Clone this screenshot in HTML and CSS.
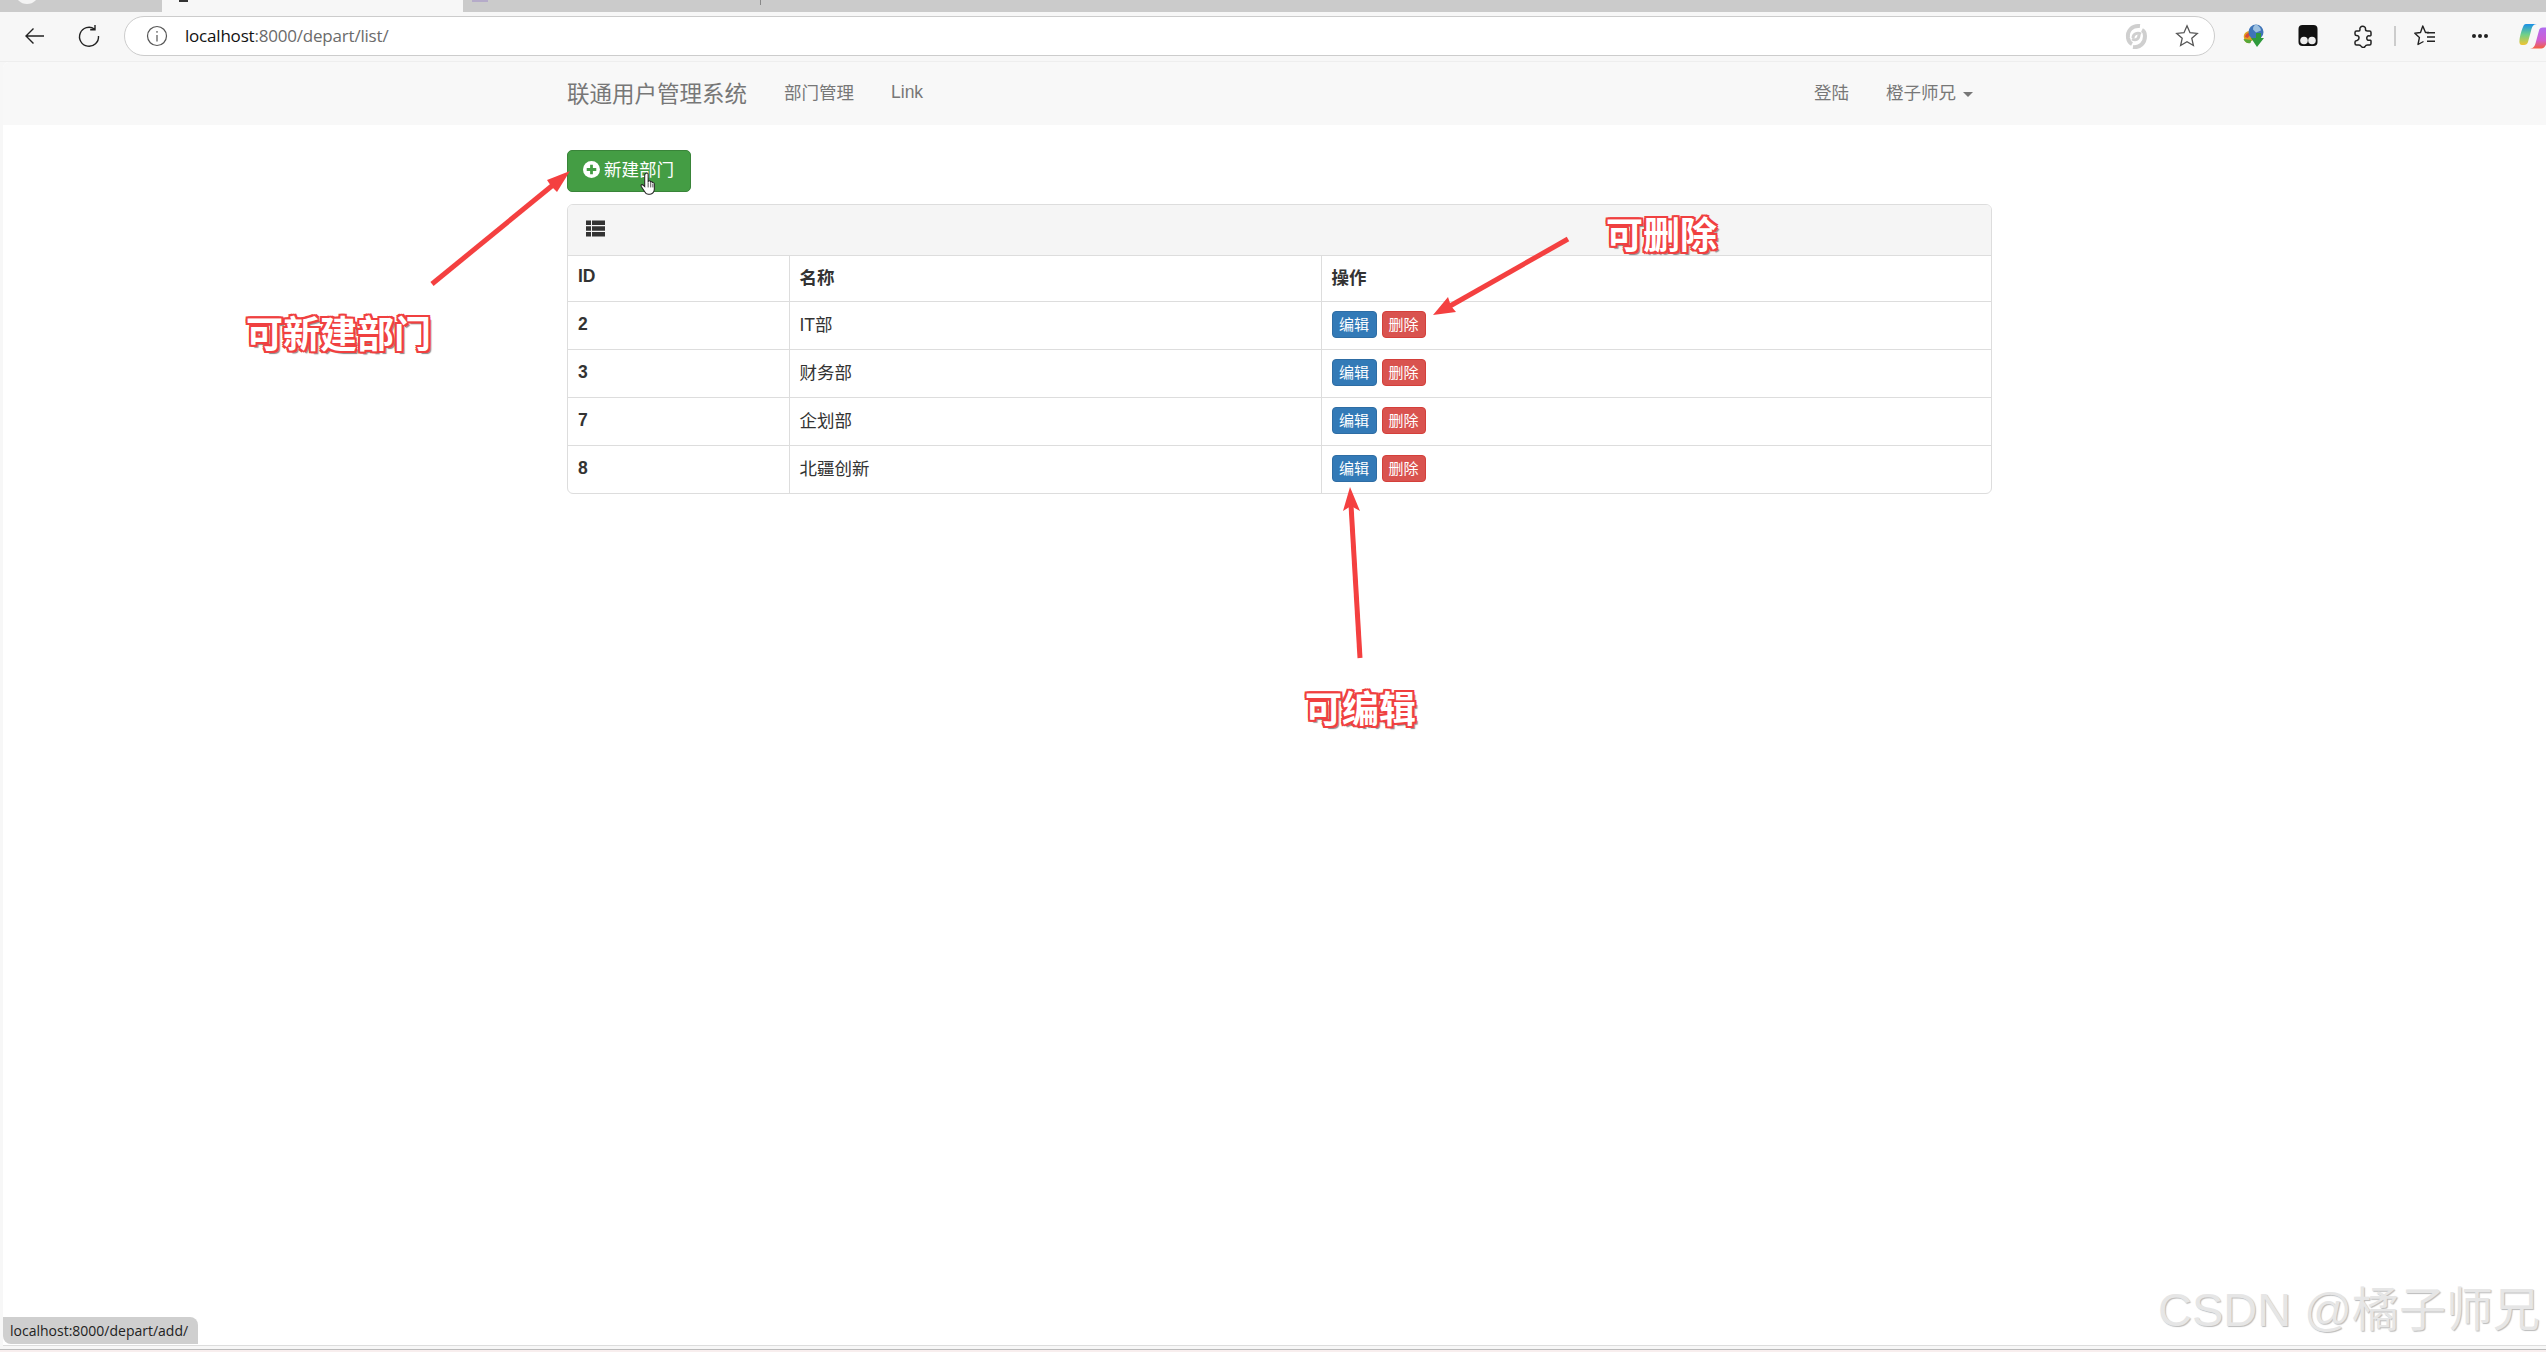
FILE: index.html
```html
<!DOCTYPE html>
<html lang="zh-CN">
<head>
    <meta charset="UTF-8">
    <title>部门列表</title>
    <link rel="stylesheet" href="styles.css">
</head>
<body>
    <div class="tab-strip">
        <div class="tab tab-left"><span class="tab-dot"></span></div>
        <div class="tab tab-active"><span class="tab-fav"></span></div>
        <div class="tab tab-right"><span class="tab-fav-2"></span><span class="tab-line"></span></div>
    </div>

    <div class="toolbar">
        <svg class="tool-icon" width="24" height="24" viewBox="0 0 24 24" fill="none" stroke="#222" stroke-width="1.400"><path d="M22 12H4M11.500 4.500L4 12l7.500 7.500"/></svg>
        <svg class="tool-icon reload" width="24" height="24" viewBox="0 0 24 24" fill="none" stroke="#222" stroke-width="1.400"><path d="M17.500 5A9.500 9.500 0 1 0 21.500 12M18 1v4.800h-4.800"/></svg>
        <div class="address">
            <svg width="22" height="22" viewBox="0 0 22 22" fill="none" stroke="#555" stroke-width="1.200"><circle cx="11" cy="11" r="9.500"/><path d="M11 10v6.500M11 6v1.800"/></svg>
            <div class="url"><span class="url-host">localhost</span>:8000/depart/list/</div>
            <svg class="addr-sync" width="22" height="26" viewBox="0 0 22 26" fill="none" stroke="#cfcfcf" stroke-width="4"><path d="M15 3C7 2 2 8 3 15c.5 3 2 5 4 6"/><path d="M8 24c7 1 12-4 12-11 0-3-1-5-3-6"/><path d="M8 15c0-4 4-6 8-4" stroke-width="3"/><path d="M14 12c0 4-3 6-7 4" stroke-width="3"/></svg>
            <svg width="24" height="24" viewBox="0 0 24 24" fill="none" stroke="#555" stroke-width="1.300"><path d="M12 1.800l3 6.900 7.300.7-5.500 4.900 1.600 7.200-6.400-3.800-6.400 3.800 1.600-7.200-5.500-4.900 7.300-.7z"/></svg>
        </div>
        <div class="tool-right">
            <svg class="ti-idm" width="22" height="24" viewBox="0 0 22 24">
                <path d="M2 14C1 10 4 7 8 7l3 9-5 3c-2 0-3.500-2-4-5z" fill="#e0a020"/>
                <path d="M3 13c0-2 2-4 4-4l1 3c-1 0-2 1-2 2z" fill="#d94a38"/>
                <path d="M1.500 15c1 3 4 5 7 4l1-3z" fill="#58a838"/>
                <circle cx="14" cy="8" r="7.500" fill="#3f74b8"/>
                <path d="M14 .5c3 1 5 4 5 6l-5 2-3-3c0-3 1-4 3-5z" fill="#9cc0e0"/>
                <path d="M9 14h5V9h5v5h3l-7 9z" fill="#2f9a3c"/>
            </svg>
            <svg class="ti-tamper" width="22" height="24" viewBox="0 0 22 24"><rect x="1.500" y="1" width="19" height="21" rx="4" fill="#111"/><circle cx="7" cy="16.500" r="3.800" fill="#eee"/><circle cx="15" cy="16.500" r="3.800" fill="#eee"/></svg>
            <svg class="ti-puzzle" width="22" height="24" viewBox="0 0 22 24" fill="none" stroke="#222" stroke-width="1.500" stroke-linejoin="round"><path d="M8 5.500c-1-4 6-4.500 5.500 0 0 1 1 1.500 2 1.500h2c1 0 1.500.5 1.500 1.500V11c0 1-1 1-2 .8-3-.3-3 4.800 0 4.500 1-.2 2-.2 2 .8v2.400c0 1-.5 1.500-1.500 1.500h-2c-1 0-2 .5-2.500 1.500-1 1.500-3.500 1-4-.5-.3-1-1-1-2-1H4.500c-1 0-1.500-.5-1.500-1.500V18c0-1 1-1.300 2-1.500 3-1 2.500-5-.5-5-1 0-1.500-.5-1.500-1.500V8.500C3 7.500 3.500 7 4.500 7H7c.7 0 1-.7 1-1.500z"/></svg>
            <span class="tool-sep"></span>
            <svg class="ti-fav" width="22" height="24" viewBox="0 0 22 24" fill="none" stroke="#222" stroke-width="1.400" stroke-linejoin="round"><path d="M15 8.500h-3.500L8.800 2 6.500 8.500.8 9.200l4.600 4.400L4 20.500l5.500-3"/><path d="M13 8.800h8M13 13h8M13 17.200h8"/></svg>
            <div class="more"><i></i><i></i><i></i></div>
            <svg class="copilot" width="30" height="26" viewBox="0 0 30 26">
                <defs>
                    <linearGradient id="cpA" x1="0" y1="0" x2="0" y2="1"><stop offset="0" stop-color="#1a90e8"/><stop offset=".5" stop-color="#6fd08a"/><stop offset="1" stop-color="#f2c530"/></linearGradient>
                    <linearGradient id="cpB" x1="0" y1="0" x2="0" y2="1"><stop offset="0" stop-color="#b06cf0"/><stop offset=".6" stop-color="#d05fd0"/><stop offset="1" stop-color="#f5603f"/></linearGradient>
                </defs>
                <path d="M7 1h11c-4 0-5 3-6 7l-3 11c-.5 2-2 3-4 3H3c-2 0-3-2-2.500-5C1 12 3 6 4 4c.7-2 1.500-3 3-3z" fill="url(#cpA)"/>
                <path d="M30 9c0 5-2 11-3.500 13.500-1 2-2.500 3-4 3H11c4 0 5-3 6-7l3-11c.5-2 2-3 4-3h2c3 0 4 2 4 4.500z" fill="url(#cpB)"/>
            </svg>
        </div>
    </div>

    <div class="page">
        <nav class="navbar">
            <div class="container nav-inner">
                <a class="brand">联通用户管理系统</a>
                <a class="nav-link nav-cjk">部门管理</a>
                <a class="nav-link">Link</a>
                <div class="nav-right">
                    <a class="nav-link">登陆</a>
                    <a class="nav-link">橙子师兄<span class="caret"></span></a>
                </div>
            </div>
        </nav>

        <div class="container content">
            <div class="toolbar-row">
                <a class="btn btn-add">
                    <svg class="plus-icon" width="17" height="17" viewBox="0 0 16 16"><circle cx="8" cy="8" r="8" fill="#fff"/><path d="M8 3.500v9M3.500 8h9" stroke="#449d44" stroke-width="2.600"/></svg>
                    <span>新建部门</span>
                </a>
            </div>

            <div class="panel">
                <div class="panel-heading">
                    <svg class="list-icon" width="19" height="17" viewBox="0 0 19 16" fill="#333"><path d="M0 0h5v4.400H0zM6 0h13v4.400H6zM0 5.800h5v4.400H0zM6 5.800h13v4.400H6zM0 11.600h5V16H0zM6 11.600h13V16H6z"/></svg>
                </div>
                <table class="table">
                    <thead>
                        <tr><th class="col-id">ID</th><th class="col-name">名称</th><th>操作</th></tr>
                    </thead>
                    <tbody>
                        <tr>
                            <th>2</th><td class="name">IT部</td>
                            <td class="ops"><a class="btn-xs btn-edit">编辑</a><a class="btn-xs btn-del">删除</a></td>
                        </tr>
                        <tr>
                            <th>3</th><td class="name">财务部</td>
                            <td class="ops"><a class="btn-xs btn-edit">编辑</a><a class="btn-xs btn-del">删除</a></td>
                        </tr>
                        <tr>
                            <th>7</th><td class="name">企划部</td>
                            <td class="ops"><a class="btn-xs btn-edit">编辑</a><a class="btn-xs btn-del">删除</a></td>
                        </tr>
                        <tr>
                            <th>8</th><td class="name">北疆创新</td>
                            <td class="ops"><a class="btn-xs btn-edit">编辑</a><a class="btn-xs btn-del">删除</a></td>
                        </tr>
                    </tbody>
                </table>
            </div>
        </div>

        <!-- hand cursor over the add button -->
        <svg class="cursor" width="18" height="24" viewBox="0 0 20 28"><path d="M6 2c1-1.500 3-1 3 1v8l1-.5c1-.5 2 0 2 1 1-.5 2 0 2.200 1 1-.3 2 .3 2 1.500v6c0 3-2 6-5 6H9c-2 0-3-1-4-3l-4-6c-1-2 1-3 2.500-1.500L5 17V3z" fill="#fff" stroke="#222" stroke-width="1.200"/><path d="M9 12v6M12 12v6M14.500 14v4" stroke="#222" stroke-width=".9"/></svg>

        <!-- red annotations drawn on top of the screenshot -->
        <svg class="arrows" width="2546" height="1352" viewBox="0 0 2546 1352" fill="#f44040">
            <path d="M432 284L553 185" stroke="#f44040" stroke-width="5"/>
            <path d="M570 171L557 192L551 186L547 180z"/>
            <path d="M1568 239L1450 306" stroke="#f44040" stroke-width="5"/>
            <path d="M1433 315L1448 297L1451 306L1456 312z"/>
            <path d="M1360 658L1351 505" stroke="#f44040" stroke-width="5"/>
            <path d="M1350 487L1360 511L1351 506L1343 511z"/>
        </svg>
        <div class="note note-add">可新建部门</div>
        <div class="note note-del">可删除</div>
        <div class="note note-edit">可编辑</div>

        <div class="status">localhost:8000/depart/add/</div>
        <div class="watermark">CSDN @橘子师兄</div>
    </div>
    <div class="bottom-edge"></div>
</body>
</html>
```

FILE: styles.css
```css
html, body {
    margin: 0;
    height: 100%;
    overflow: hidden;
    background: #f7f7f7;
}

body {
    display: flex;
    flex-direction: column;
    font-family: "Liberation Sans", "Noto Sans CJK SC", sans-serif;
    font-size: 17.500px;
    color: #333;
}

a {
    text-decoration: none;
}

/* browser chrome */
.tab-strip {
    display: flex;
    height: 12px;
    background: #cbcbcb;
    flex: none;
    overflow: hidden;
}

.tab {
    height: 12px;
    position: relative;
    overflow: hidden;
}

.tab-left {
    width: 162px;
    border-radius: 0 0 10px 0;
}

.tab-dot {
    display: block;
    width: 24px;
    height: 24px;
    margin: -20px 0 0 15px;
    border-radius: 50%;
    background: #f3f3f3;
}

.tab-active {
    width: 301px;
    background: #f7f7f7;
}

.tab-fav {
    position: absolute;
    left: 17px;
    top: 0;
    width: 9px;
    height: 2px;
    background: #333;
}

.tab-right {
    flex: 1;
    border-radius: 0 0 0 10px;
}

.tab-fav-2 {
    position: absolute;
    left: 9px;
    top: 0;
    width: 16px;
    height: 2px;
    background: #b5abc9;
}

.tab-line {
    position: absolute;
    left: 297px;
    top: 0;
    width: 1px;
    height: 5px;
    background: #888;
}

.toolbar {
    display: flex;
    align-items: center;
    height: 50px;
    flex: none;
    padding: 0 0 2px 22px;
    border-bottom: 1px solid #eee;
    box-sizing: border-box;
}

.tool-icon {
    flex: none;
    margin-right: 31px;
}

.reload {
    margin-right: 23px;
}

.address {
    display: flex;
    align-items: center;
    flex: none;
    width: 2091px;
    height: 40px;
    box-sizing: border-box;
    padding: 0 15px 0 21px;
    background: #fff;
    border: 1px solid #ccc;
    border-radius: 20px;
    gap: 17px;
}

.url {
    flex: 1;
    font-family: "Open Sans", sans-serif;
    font-size: 17px;
    color: #6b6b6b;
    letter-spacing: -0.200px;
}

.url-host {
    color: #111;
}

.addr-sync {
    margin-right: 11px;
}

.tool-right {
    display: flex;
    align-items: center;
    flex: none;
}

.ti-idm {
    margin-left: 27px;
}

.ti-tamper,
.ti-puzzle {
    margin-left: 33px;
}

.tool-sep {
    width: 2px;
    height: 20px;
    background: #ccc;
    margin-left: 20px;
}

.ti-fav {
    margin-left: 18px;
}

.more {
    display: flex;
    gap: 2px;
    margin-left: 36px;
}

.more i {
    width: 4px;
    height: 4px;
    border-radius: 50%;
    background: #222;
}

.copilot {
    margin-left: 31px;
    flex: none;
}

/* page */
.page {
    position: relative;
    flex: 1;
    margin-left: 3px;
    background: #fff;
    border-top-left-radius: 6px;
    border-bottom: 1px solid #ddd;
}

.bottom-edge {
    height: 3px;
    flex: none;
    box-sizing: border-box;
    margin-top: 3px;
    border-top: 1px solid #bbb;
    background: #f8eeee;
}

.container {
    width: 1425px;
    margin-left: 564px;
}

.navbar {
    height: 63px;
    background: #f8f8f8;
    border-top-left-radius: 6px;
}

.nav-inner {
    display: flex;
    align-items: center;
    height: 61px;
}

.brand {
    font-size: 22.500px;
    color: #777;
    margin-right: 37px;
    margin-bottom: 2px;
}

.nav-link {
    color: #777;
    margin-right: 37px;
}

.nav-cjk,
.nav-right {
    margin-bottom: 2px;
}

.nav-right {
    display: flex;
    margin-left: auto;
}

.nav-right .nav-link:last-child {
    margin-right: 19px;
}

.caret {
    display: inline-block;
    margin-left: 7px;
    vertical-align: middle;
    border-top: 5px solid #777;
    border-left: 5px solid transparent;
    border-right: 5px solid transparent;
}

.content {
    padding-top: 25px;
}

.toolbar-row {
    display: flex;
    margin-bottom: 12px;
}

.btn {
    display: inline-flex;
    align-items: center;
    height: 42px;
    width: 124px;
    box-sizing: border-box;
    padding: 0 15px;
    gap: 4px;
    white-space: nowrap;
    color: #fff;
    background: #449d44;
    border: 1px solid #398439;
    border-radius: 5px;
}

.btn span {
    margin-bottom: 5px;
}

.plus-icon {
    margin-bottom: 4px;
}

.panel {
    border: 1px solid #ddd;
    border-radius: 6px;
    overflow: hidden;
}

.panel-heading {
    display: flex;
    align-items: center;
    height: 50px;
    padding-left: 18px;
    background: #f5f5f5;
    border-bottom: 1px solid #ddd;
}

.list-icon {
    margin-bottom: 3px;
}

.table {
    width: 100%;
    border-collapse: collapse;
    table-layout: fixed;
}

.table th,
.table td {
    box-sizing: border-box;
    height: 48px;
    padding: 0 10px;
    text-align: left;
    border-top: 1px solid #ddd;
    border-left: 1px solid #ddd;
}

.table th {
    padding-bottom: 2px;
}

.table td.name {
    padding-bottom: 4px;
}

.table td.ops {
    padding-bottom: 1px;
}

.table thead th {
    height: 45px;
    padding-bottom: 4px;
    border-top: 0;
}

.table th:first-child {
    border-left: 0;
}

.col-id {
    width: 221px;
}

.col-name {
    width: 532px;
}

.btn-xs {
    display: inline-block;
    width: 45px;
    height: 27px;
    line-height: 25px;
    box-sizing: border-box;
    text-align: center;
    font-size: 15px;
    color: #fff;
    border-radius: 4px;
    vertical-align: middle;
}

.btn-edit {
    background: #337ab7;
    border: 1px solid #2e6da4;
}

.btn-del {
    width: 44px;
    margin-left: 5px;
    background: #d9534f;
    border: 1px solid #d43f3a;
}

/* things lying over the page */
.cursor {
    position: absolute;
    left: 637px;
    top: 110px;
}

.arrows {
    position: absolute;
    left: -3px;
    top: -62px;
    pointer-events: none;
}

.note {
    position: absolute;
    font-family: "Noto Sans CJK SC", sans-serif;
    font-size: 37px;
    font-weight: 700;
    line-height: 44px;
    color: #fff;
    text-shadow: -2px 0 #f04040, 2px 0 #f04040, 0 -2px #f04040, 0 2px #f04040, -2px -2px #f04040, 2px -2px #f04040, -2px 2px #f04040, 2px 2px #f04040, 3px 3px 1px #888;
}

.note-add {
    left: 243px;
    top: 248px;
}

.note-del {
    left: 1603px;
    top: 149px;
}

.note-edit {
    left: 1302px;
    top: 623px;
}

.status {
    position: absolute;
    left: 0;
    bottom: 1px;
    height: 27px;
    padding: 0 10px 0 7px;
    line-height: 27px;
    font-family: "Open Sans", sans-serif;
    font-size: 14px;
    color: #222;
    background: #cfcfcf;
    border-radius: 0 8px 0 8px;
}

.watermark {
    position: absolute;
    right: 6px;
    bottom: 8px;
    font-size: 47px;
    line-height: 54px;
    color: #e6e6e6;
    text-shadow: 1px 1px 1px #bbb;
}
```
